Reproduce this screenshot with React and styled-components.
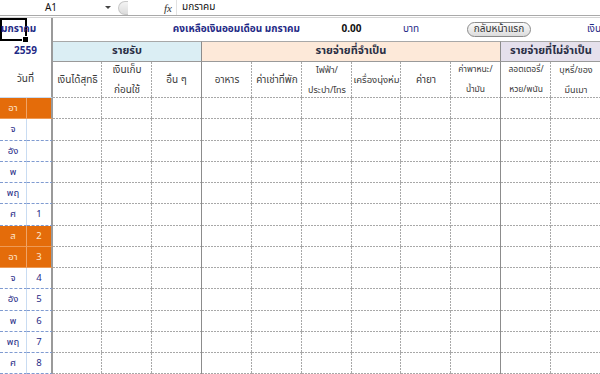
import React from "react";
import styled, { createGlobalStyle } from "styled-components";

const GlobalStyle = createGlobalStyle`
  html, body {
    margin: 0;
    padding: 0;
    background: #ffffff;
    overflow: hidden;
  }
  body {
    font-family: Tahoma, "Noto Sans Thai", "Noto Sans", "DejaVu Sans", sans-serif;
    width: 600px;
    height: 374px;
  }
`;

const NAVY = "#1f2a86";
const GRID = "#a8a8a8";
const EDGE = "#9a9a9a";
const ORANGE = "#e46c0a";

// column widths A..M
const COLS = [27, 26, 49, 50, 50, 50, 50, 50, 49, 50, 50, 50, 50];

const Wrapper = styled.div`
  width: 600px;
  height: 374px;
  overflow: hidden;
`;

/* ---------- formula bar ---------- */
const FormulaBar = styled.div`
  display: flex;
  align-items: center;
  height: 15px;
  border-bottom: 1px solid #a9a9a9;
  font-size: 10px;
  color: #111;
`;

const NameBox = styled.div`
  width: 100px;
  text-align: center;
  padding-left: 2px;
  box-sizing: border-box;
`;

const DropArrow = styled.div`
  width: 0;
  height: 0;
  margin-left: 5px;
  border-left: 3px solid transparent;
  border-right: 3px solid transparent;
  border-top: 3px solid #444;
`;

const Splitter = styled.div`
  width: 10px;
  height: 14px;
  margin-left: 7px;
  border-radius: 7px 0 0 7px;
  background: linear-gradient(#f4f4f4, #dcdcdc);
  border: 1px solid #c8c8c8;
  border-right: none;
  box-sizing: border-box;
`;

const Fx = styled.div`
  width: 12px;
  margin-left: 36px;
  font-family: "Liberation Serif", serif;
  font-style: italic;
  font-size: 11px;
  color: #333;
`;

const FormulaInput = styled.div`
  flex: 1;
  height: 15px;
  line-height: 15px;
  padding-left: 5px;
  border-left: 1px solid #e2e2e2;
`;

const Gap = styled.div`
  height: 1px;
  background: #ffffff;
  border-bottom: 1px solid #d4d4d4;
`;

/* ---------- sheet ---------- */
const Sheet = styled.div`
  display: grid;
  grid-template-columns: ${COLS.map((w) => `${w}px`).join(" ")} 60px;
  grid-template-rows: 23px 21px 36px repeat(13, 21.25px);
  width: 661px;
`;

const dashH = `repeating-linear-gradient(to right, ${GRID} 0 2px, transparent 2px 3px) left bottom / 100% 1px no-repeat`;
const dashV = `repeating-linear-gradient(to bottom, ${GRID} 0 2px, transparent 2px 3px) right top / 1px 100% no-repeat`;

const Cell = styled.div`
  grid-column: ${({ $col, $span = 1 }) => `${$col} / span ${$span}`};
  box-sizing: border-box;
  display: flex;
  align-items: center;
  justify-content: ${({ $align }) => $align || "center"};
  text-align: center;
  background: ${({ $bg }) => $bg || "transparent"};
  border-right: ${({ $right }) => $right || "none"};
  border-bottom: ${({ $bottom }) => $bottom || "none"};
  color: ${({ $color }) => $color || "#333"};
  font-weight: ${({ $bold }) => ($bold ? "bold" : "normal")};
  font-size: ${({ $size }) => $size || "10px"};
  line-height: 1.9;
  padding: ${({ $pad }) => $pad || "0"};
  white-space: nowrap;
  position: relative;
`;

/* a grid cell with Excel's fine dashed gridlines */
const GridCell = styled(Cell)`
  background: ${({ $solidRight }) => ($solidRight ? dashH : `${dashH}, ${dashV}`)};
`;

const SubHead = styled(GridCell)`
  flex-direction: column;
  line-height: 20px;
  color: #3a3a3a;
`;

const Selected = styled(Cell)`
  border: 2px solid #000;
  justify-content: flex-start;
  z-index: 2;

  &::after {
    content: "";
    position: absolute;
    right: -4px;
    bottom: -4px;
    width: 5px;
    height: 5px;
    background: #000;
    border: 1px solid #fff;
  }
`;

const Overflow = styled.span`
  position: relative;
  z-index: -1;
  margin-left: -1px;
  flex-shrink: 0;
`;

const BackButton = styled.button`
  height: 15px;
  width: 64px;
  margin-left: 16px;
  padding: 0;
  border: 1px solid #8a8a8a;
  border-radius: 8px;
  background: linear-gradient(#fbfbfb, #dcdcdc);
  font-family: inherit;
  font-size: 10px;
  color: #333;
  line-height: 13px;
`;

const OverText = styled.span`
  display: block;
  margin-left: ${({ $indent }) => $indent}px;
  flex-shrink: 0;
`;

const GroupHead = styled(Cell)`
  border-top: 1px solid ${GRID};
  border-bottom: 1px solid ${EDGE};
  color: #2a2f45;
  font-weight: bold;
  font-size: 11px;
`;

const DayCell = styled(Cell)`
  font-size: 9.5px;
  background: ${({ $weekend }) => ($weekend ? ORANGE : "transparent")};
  color: ${({ $weekend }) => ($weekend ? "#fde6cf" : NAVY)};
  border-bottom: ${({ $weekend }) => ($weekend ? "1px solid #ee9a55" : "1px dashed #7f9bd1")};
`;

const solid = `2px solid ${EDGE}`;
const darkLine = `1px solid #8c8c8c`;

const SUBHEADS = [
  { lines: ["เงินได้สุทธิ"] },
  { lines: ["เงินเก็บ", "ก่อนใช้"] },
  { lines: ["อื่น ๆ"] },
  { lines: ["อาหาร"] },
  { lines: ["ค่าเช่าที่พัก"] },
  { lines: ["ไฟฟ้า/", "ประปา/โทร"], size: "9px" },
  { lines: ["เครื่องนุ่งห่ม"], size: "9.5px" },
  { lines: ["ค่ายา"] },
  { lines: ["ค่าพาหนะ/", "น้ำมัน"], size: "8.5px" },
  { lines: ["ลอตเตอรี่/", "หวย/พนัน"], size: "8.5px" },
  { lines: ["บุหรี่/ของ", "มึนเมา"], size: "9px" },
];

// data columns C..M: which have a solid group edge on the right
const GROUP_EDGE = [false, false, true, false, false, false, false, false, true, false, false];

const DAYS = [
  ["อา", "", true],
  ["จ", ""],
  ["อัง", ""],
  ["พ", ""],
  ["พฤ", ""],
  ["ศ", "1"],
  ["ส", "2", true],
  ["อา", "3", true],
  ["จ", "4"],
  ["อัง", "5"],
  ["พ", "6"],
  ["พฤ", "7"],
  ["ศ", "8"],
];

const DayRow = ({ name, num, weekend }) => (
  <>
    <DayCell $col={1} $weekend={weekend} $right={weekend ? "1px solid #f0a468" : "1px solid #c9dcf2"}>
      {name}
    </DayCell>
    <DayCell $col={2} $weekend={weekend} $right={solid}>
      {num}
    </DayCell>
    {GROUP_EDGE.map((edge, j) => (
      <GridCell key={j} $col={j + 3} $solidRight={edge} $right={edge ? darkLine : ""} />
    ))}
    <GridCell $col={14} $solidRight />
  </>
);

export default function App() {
  return (
    <Wrapper>
      <GlobalStyle />
      <FormulaBar>
        <NameBox>A1</NameBox>
        <DropArrow />
        <Splitter />
        <Fx>fx</Fx>
        <FormulaInput>มกราคม</FormulaInput>
      </FormulaBar>
      <Gap />
      <Sheet>
        {/* row 1 */}
        <Selected $col={1} $color={NAVY} $bold>
          <Overflow>มกราคม</Overflow>
        </Selected>
        <Cell $col={2} $right={solid} />
        <Cell $col={3} $span={5} $align="flex-end" $color={NAVY} $bold $pad="0 2px 0 0">
          คงเหลือเงินออมเดือน มกราคม
        </Cell>
        <Cell $col={8} $span={2} $color="#111" $bold>
          0.00
        </Cell>
        <Cell $col={10} $align="flex-start" $color={NAVY} $pad="0 0 0 2px">
          บาท
        </Cell>
        <Cell $col={11} $span={2} $align="flex-start">
          <BackButton>กลับหน้าแรก</BackButton>
        </Cell>
        <Cell $col={13} $span={2} $align="flex-start" $color={NAVY}>
          <OverText $indent={36}>เงินออมสะสม</OverText>
        </Cell>

        {/* row 2 */}
        <Cell $col={1} $span={2} $right={solid} $color={NAVY} $bold>
          2559
        </Cell>
        <GroupHead $col={3} $span={3} $bg="#dbeef4" $right={darkLine}>
          รายรับ
        </GroupHead>
        <GroupHead $col={6} $span={6} $bg="#fde9d9" $right={darkLine}>
          รายจ่ายที่จำเป็น
        </GroupHead>
        <GroupHead $col={12} $span={3} $bg="#e5e0ec" $align="flex-start" $pad="0 0 0 9px">
          รายจ่ายที่ไม่จำเป็น
        </GroupHead>

        {/* row 3 */}
        <Cell $col={1} $span={2} $right={solid} $bottom="1px solid #c9dcf2" $color="#333">
          วันที่
        </Cell>
        {SUBHEADS.map((h, j) => (
          <SubHead
            key={j}
            $col={j + 3}
            $solidRight={GROUP_EDGE[j]}
            $right={GROUP_EDGE[j] ? darkLine : ""}
            $size={h.size}
          >
            {h.lines.map((l) => (
              <span key={l}>{l}</span>
            ))}
          </SubHead>
        ))}
        <GridCell $col={14} $solidRight />

        {/* data rows */}
        {DAYS.map(([name, num, weekend], i) => (
          <DayRow key={i} name={name} num={num} weekend={weekend} />
        ))}
      </Sheet>
    </Wrapper>
  );
}
